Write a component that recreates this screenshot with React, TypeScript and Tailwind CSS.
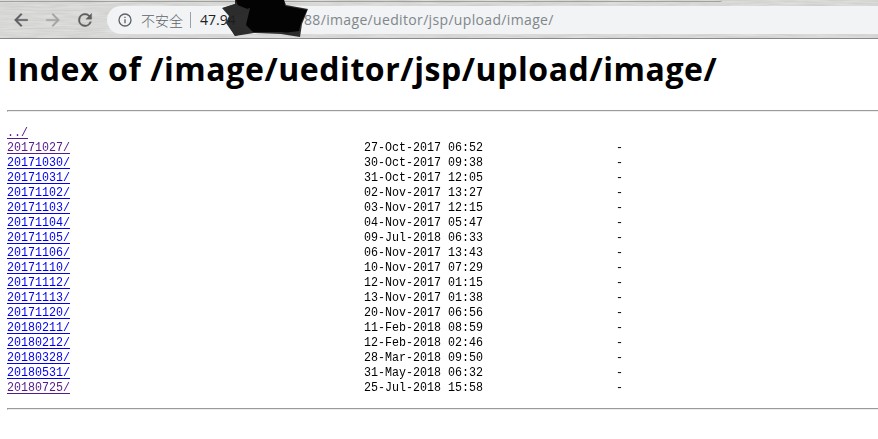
type Entry = { name: string; date: string; visited?: boolean };

const entries: Entry[] = [
  { name: "20171027/", date: "27-Oct-2017 06:52", visited: true },
  { name: "20171030/", date: "30-Oct-2017 09:38" },
  { name: "20171031/", date: "31-Oct-2017 12:05" },
  { name: "20171102/", date: "02-Nov-2017 13:27" },
  { name: "20171103/", date: "03-Nov-2017 12:15" },
  { name: "20171104/", date: "04-Nov-2017 05:47" },
  { name: "20171105/", date: "09-Jul-2018 06:33" },
  { name: "20171106/", date: "06-Nov-2017 13:43" },
  { name: "20171110/", date: "10-Nov-2017 07:29" },
  { name: "20171112/", date: "12-Nov-2017 01:15" },
  { name: "20171113/", date: "13-Nov-2017 01:38" },
  { name: "20171120/", date: "20-Nov-2017 06:56" },
  { name: "20180211/", date: "11-Feb-2018 08:59" },
  { name: "20180212/", date: "12-Feb-2018 02:46" },
  { name: "20180328/", date: "28-Mar-2018 09:50" },
  { name: "20180531/", date: "31-May-2018 06:32" },
  { name: "20180725/", date: "25-Jul-2018 15:58", visited: true },
];

// Brushed metal theme behind the toolbar
function Metal() {
  return (
    <svg className="absolute inset-0 h-full w-full" aria-hidden="true">
      <filter id="brushed" x="0" y="0" width="100%" height="100%" colorInterpolationFilters="sRGB">
        <feTurbulence type="fractalNoise" baseFrequency="0.03 0.6" numOctaves="3" seed="4" />
        <feColorMatrix values="0.11 0 0 0 0.79  0.11 0 0 0 0.79  0.11 0 0 0 0.785  0 0 0 0 1" />
      </filter>
      <rect width="100%" height="100%" filter="url(#brushed)" />
    </svg>
  );
}

function Toolbar() {
  return (
    <header className="relative h-[39px] overflow-hidden border-b border-[#888888] bg-[#d9d9d8]">
      <Metal />
      <div className="absolute left-0 top-0 h-[2px] w-[722px] rounded-br border-b border-[#a0a09f]" />
      <div className="relative mt-[6px] flex h-[28px] items-center">
        <svg className="ml-[11px] h-5 w-5 shrink-0" viewBox="0 0 24 24" fill="#5d5e60" stroke="#5d5e60" strokeWidth="0.4">
          <path d="M20 11H7.83l5.59-5.59L12 4l-8 8 8 8 1.41-1.41L7.83 13H20v-2z" />
        </svg>
        <svg className="ml-[12px] h-5 w-5 shrink-0" viewBox="0 0 24 24" fill="#a3a4a4" stroke="#a3a4a4" strokeWidth="0.4">
          <path d="M12 4l-1.41 1.41L16.17 11H4v2h12.17l-5.58 5.59L12 20l8-8z" />
        </svg>
        <svg className="ml-[12px] h-5 w-5 shrink-0" viewBox="0 0 24 24" fill="#5d5e60" stroke="#5d5e60" strokeWidth="0.4">
          <path d="M17.65 6.35A7.96 7.96 0 0 0 12 4a8 8 0 1 0 7.73 10h-2.08A6 6 0 1 1 12 6c1.66 0 3.14.69 4.22 1.78L13 11h7V4l-2.35 2.35z" />
        </svg>
        <div className="relative ml-[12px] flex h-[28px] flex-1 items-center rounded-l-full bg-[#f1f3f4]">
          <svg className="ml-[10px] h-4 w-4 shrink-0" viewBox="0 0 24 24" fill="#5f6368">
            <path d="M11 7h2v2h-2zm0 4h2v6h-2zm1-9a10 10 0 1 0 0 20 10 10 0 0 0 0-20zm0 18a8 8 0 1 1 0-16 8 8 0 0 1 0 16z" />
          </svg>
          <span className="ml-[8px] w-[43px] whitespace-nowrap font-['Noto_Sans_CJK_SC',sans-serif] text-[14px] font-light leading-[28px] text-[#5f6368]">
            不安全
          </span>
          <span className="ml-[6px] h-4 w-px bg-[#9aa0a6]" />
          <span className="ml-[9px] w-[38px] whitespace-pre font-['Open_Sans','Noto_Sans',sans-serif] text-[14px] leading-[28px] text-[#202124]">
            47.94
          </span>
          <span className="ml-[66px] whitespace-pre font-['Open_Sans','Noto_Sans',sans-serif] text-[14px] leading-[28px] tracking-[0.34px] text-[#80868b]">
            88/image/ueditor/jsp/upload/image/
          </span>
        </div>
      </div>
      {/* Marker scribble over the host name */}
      <svg className="absolute left-[220px] top-0 h-[39px] w-[92px]" viewBox="220 0 92 39">
        <path fill="#1c1c1c" fillOpacity="0.92" d="M235 0H284L286 5 308 9 302 24 300 37 281 34 254 33 235 36 226 23 229 16 222 8 235 4z" />
        <path fill="#030303" d="M236 0H284L285 6 307 10 301 23 298 35 282 32 253 32 246 25 250 8 240 11z" />
        <path fill="#2c2c2c" d="M223 8L235 4 250 10 238 15 231 16zM229 26L240 27 244 33 235 36zM283 33L299 31 299 36z" />
      </svg>
    </header>
  );
}

function Rule() {
  return <hr className="h-[2px] border-0 border-b border-l border-t border-b-[#eeeeee] border-l-[#9a9a9a] border-t-[#9a9a9a]" />;
}

export default function App() {
  return (
    <div className="h-[439px] w-[878px] overflow-hidden bg-white">
      <Toolbar />
      <main className="pl-[7px]">
        <h1 className="h-[71px] whitespace-nowrap pt-[8px] font-['Open_Sans','Noto_Sans',sans-serif] text-[32px] font-bold leading-[44px] tracking-[0.57px] text-black">
          Index of /image/ueditor/jsp/upload/image/
        </h1>
        <Rule />
        {/* Condensed to a 7px character cell */}
        <pre className="mt-[13px] h-[283px] w-[1100px] origin-left scale-x-[0.8974] font-['Liberation_Mono',monospace] text-[13px] leading-[15px] text-black">
          <a className="text-[#551a8b] underline underline-offset-2">../</a>
          {"\n"}
          {entries.map((entry) => (
            <span key={entry.name}>
              <a className={entry.visited ? "text-[#551a8b] underline underline-offset-2" : "text-[#0000ee] underline underline-offset-2"}>
                {entry.name}
              </a>
              {" ".repeat(42) + entry.date + " ".repeat(19) + "-\n"}
            </span>
          ))}
        </pre>
        <Rule />
      </main>
    </div>
  );
}
